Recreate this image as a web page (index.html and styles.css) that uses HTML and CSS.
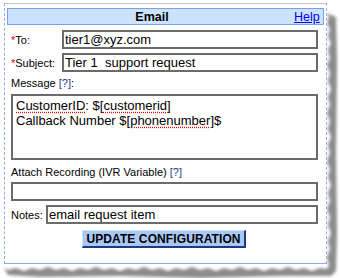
FILE: index.html
```html
<!DOCTYPE html>
<html>
<head>
<meta charset="utf-8">
<link rel="stylesheet" href="styles.css">
</head>
<body>
<div class="sheet">
  <svg class="shadow" width="340" height="278" viewBox="0 0 340 278">
    <defs>
      <filter id="blur" x="-10%" y="-10%" width="120%" height="120%">
        <feGaussianBlur stdDeviation="1.4"/>
      </filter>
    </defs>
    <path filter="url(#blur)" fill="#8c8c8c" d="M326 10 L329 14 L327 20 L330 26 L328 33 L331 40 L328 47 L330 55 L327 62 L330 70 L328 78 L331 86 L328 94 L330 102 L327 110 L330 118 L328 126 L331 134 L328 142 L330 150 L327 158 L330 166 L328 174 L331 182 L328 190 L330 198 L327 206 L330 214 L328 222 L331 230 L328 238 L330 246 L327 254 L329 262 L327 266 L320 265 L312 268 L304 265 L296 267 L288 264 L280 267 L272 265 L264 268 L256 265 L248 267 L240 264 L232 267 L224 265 L216 268 L208 265 L200 267 L192 264 L184 267 L176 265 L168 268 L160 265 L152 267 L144 264 L136 267 L128 265 L120 268 L112 265 L104 267 L96 264 L88 267 L80 265 L72 268 L64 265 L56 267 L48 264 L40 267 L32 265 L24 268 L16 265 L8 267 L4 265 L8 272 L40 274 L120 273 L200 275 L280 273 L331 273 L336 268 L337 230 L336 150 L337 60 L336 14 Z"/>
  </svg>
  <div class="frame">
    <div class="header">
      <div class="title">Email</div>
      <a class="help" href="#">Help</a>
    </div>
    <div class="row first">
      <label class="lbl"><span class="req">*</span>To:</label>
      <input class="field" type="text" value="tier1@xyz.com">
    </div>
    <div class="row">
      <label class="lbl"><span class="req">*</span>Subject:</label>
      <input class="field" type="text" value="Tier 1  support request">
    </div>
    <div class="caption">Message <span class="q">[?]</span>:</div>
    <div class="area">
      <div><span class="spell">CustomerID</span>: $[<span class="spell">customerid</span>]</div>
      <div>Callback Number $[<span class="spell">phonenumber</span>]$</div>
    </div>
    <div class="caption second">Attach Recording (IVR Variable) <span class="q">[?]</span></div>
    <input class="field full" type="text" value="">
    <div class="row notes">
      <label class="lbl-notes">Notes:</label>
      <input class="field" type="text" value="email request item">
    </div>
    <div class="actions">
      <button class="btn" type="button">UPDATE CONFIGURATION</button>
    </div>
  </div>
</div>
</body>
</html>
```

FILE: styles.css
```css
html, body {
  margin: 0;
  padding: 0;
  background: #ffffff;
}

body {
  width: 340px;
  height: 278px;
  overflow: hidden;
  font-family: "Liberation Sans", Arial, sans-serif;
}

.sheet {
  position: relative;
  width: 340px;
  height: 278px;
}

.shadow {
  position: absolute;
  left: 0;
  top: 0;
}

.frame {
  position: relative;
  margin: 3px 0 0 4px;
  width: 323px;
  height: 261px;
  box-sizing: border-box;
  background: #ffffff;
  border-top: 1px solid #c4c4c4;
  border-left: 1px dashed #8eaef0;
  border-right: 1px dashed #8eaef0;
  border-bottom: 1px solid #8eaef0;
  padding: 4px 8px 0 6px;
  display: flex;
  flex-direction: column;
}

.header {
  margin: 0 -6px 0 -4px;
  height: 17px;
  box-sizing: border-box;
  background: #cce3fd;
  border: 1px solid #7d9fe6;
  display: flex;
  align-items: center;
}

.title {
  flex: 1;
  text-align: center;
  font-weight: bold;
  font-size: 12.5px;
  color: #000;
  padding-left: 2px;
}

.help {
  font-size: 12.5px;
  color: #0000ee;
  text-decoration: underline;
  padding-right: 1px;
  width: 28px;
}

.row {
  display: flex;
  align-items: center;
  margin-top: 4px;
}

.row.first {
  margin-top: 5px;
}

.lbl {
  width: 51px;
  flex: none;
  font-size: 11px;
  color: #000;
}

.req {
  color: #dd0000;
}

.field {
  box-sizing: border-box;
  height: 19px;
  border: 2px solid #6b6b6b;
  padding: 0 1px;
  margin: 0;
  font-family: "Liberation Sans", Arial, sans-serif;
  font-size: 13px;
  color: #000;
  background: #fff;
  outline: none;
  flex: 1;
  min-width: 0;
}

.field.full {
  width: 100%;
  flex: none;
}

.caption {
  font-size: 11px;
  line-height: 14px;
  margin: 4px 0 4px;
  color: #000;
}

.caption.second {
  margin: 5px 0 3px;
}

.q {
  color: #1d3a8a;
}

.area {
  box-sizing: border-box;
  height: 66px;
  border: 2px solid #6b6b6b;
  padding: 2px 3px;
  font-size: 13px;
  line-height: 15px;
  color: #000;
}

.spell {
  text-decoration: underline dotted #e00000;
  text-underline-offset: 2px;
}

.notes {
  margin-top: 4px;
  gap: 3px;
}

.lbl-notes {
  font-size: 11px;
  color: #000;
  flex: none;
  width: 32px;
}

.actions {
  display: flex;
  justify-content: center;
  margin-top: 6px;
}

.btn {
  box-sizing: border-box;
  width: 164px;
  height: 18px;
  margin: 0 0 0 -1px;
  padding: 0;
  background: #a9c8f7;
  border-top: 1px solid #cfe0fb;
  border-left: 1px solid #cfe0fb;
  border-right: 2px solid #1f3a80;
  border-bottom: 2px solid #1f3a80;
  font-family: "Liberation Sans", Arial, sans-serif;
  font-weight: bold;
  font-size: 12px;
  color: #000;
  letter-spacing: 0.1px;
}
```
